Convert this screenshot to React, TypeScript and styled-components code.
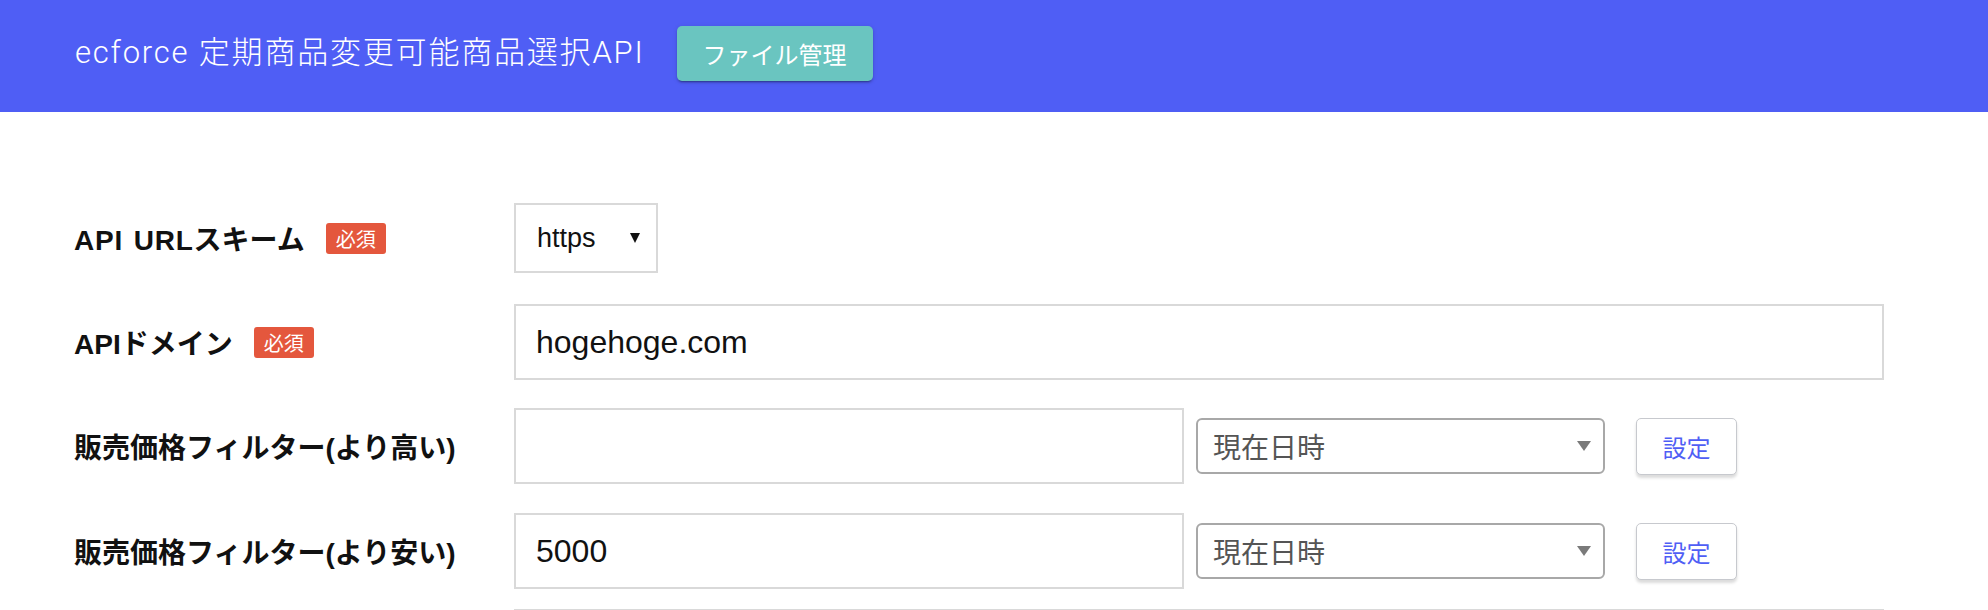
import styled, { createGlobalStyle } from "styled-components";

const GlobalStyle = createGlobalStyle`
  * {
    box-sizing: border-box;
  }
  body {
    margin: 0;
    background-color: #fff;
    color: #111;
    font-family: "Liberation Sans", "Noto Sans CJK JP", sans-serif;
  }
`;

const Header = styled.header`
  display: flex;
  align-items: center;
  gap: 32px;
  height: 112px;
  padding: 0 0 6px 75px;
  background-color: #4f5ef5;
`;

const Title = styled.h1`
  margin: 0 0 8px;
  color: #fff;
  font-family: "Roboto", "Noto Sans CJK JP", sans-serif;
  font-size: 31px;
  font-weight: 300;
  letter-spacing: 1.8px;
`;

const HeaderButton = styled.button`
  height: 55px;
  padding: 0 26px;
  border: none;
  border-radius: 5px;
  background-color: #6ac5c0;
  color: #fff;
  font-family: "Noto Sans CJK JP", sans-serif;
  font-size: 24px;
  box-shadow: 0 3px 1px -2px rgba(0, 0, 0, 0.2), 0 2px 2px 0 rgba(0, 0, 0, 0.14),
    0 1px 5px 0 rgba(0, 0, 0, 0.12);
  cursor: pointer;
`;

const Form = styled.main`
  padding: 91px 0 0 74px;
`;

const Row = styled.div<{ $gap: number }>`
  display: flex;
  align-items: center;
  margin-bottom: ${(p) => p.$gap}px;
`;

const Label = styled.label`
  display: flex;
  align-items: center;
  gap: 21px;
  flex-shrink: 0;
  width: 440px;
  font-size: 28px;
  font-weight: 700;
`;

const Latin = styled.span`
  letter-spacing: 0.8px;
  word-spacing: 2px;
`;

const Required = styled.span`
  display: inline-flex;
  align-items: center;
  height: 31px;
  padding: 0 10px;
  border-radius: 3px;
  background-color: #e4573d;
  color: #fff;
  font-size: 20px;
  font-weight: 400;
`;

const SchemeSelect = styled.div`
  display: flex;
  align-items: center;
  justify-content: space-between;
  width: 144px;
  height: 70px;
  padding: 0 16px 0 21px;
  border: 2px solid #d9d9d9;
  font-size: 27px;
  color: #111;
`;

const Caret = styled.span<{ $w: number; $h: number; $color: string }>`
  width: 0;
  height: 0;
  border-left: ${(p) => p.$w / 2}px solid transparent;
  border-right: ${(p) => p.$w / 2}px solid transparent;
  border-top: ${(p) => p.$h}px solid ${(p) => p.$color};
`;

const TextInput = styled.input<{ $width: number }>`
  width: ${(p) => p.$width}px;
  height: 76px;
  padding: 0 20px;
  border: 2px solid #d9d9d9;
  border-radius: 0;
  outline: none;
  font-family: "Liberation Sans", sans-serif;
  font-size: 32px;
  color: #111;
`;

const DateSelect = styled.div`
  display: flex;
  align-items: center;
  justify-content: space-between;
  width: 409px;
  height: 56px;
  margin-left: 12px;
  padding: 0 12px 0 15px;
  border: 2px solid #a8a8a8;
  border-radius: 6px;
  color: #555;
  font-family: "Noto Sans CJK JP", sans-serif;
  font-size: 28px;
`;

const SetButton = styled.button`
  width: 101px;
  height: 57px;
  margin-left: 31px;
  border: 1.5px solid #c7c9ce;
  border-radius: 5px;
  background-color: #fff;
  color: #4f5ef5;
  font-family: "Noto Sans CJK JP", sans-serif;
  font-size: 24px;
  box-shadow: 0 3px 3px rgba(0, 0, 0, 0.14);
  cursor: pointer;
`;

const priceFilters = [
  { label: "販売価格フィルター(より高い)", value: "", gap: 29 },
  { label: "販売価格フィルター(より安い)", value: "5000", gap: 20 },
];

export default function App() {
  return (
    <>
      <GlobalStyle />
      <Header>
        <Title>ecforce 定期商品変更可能商品選択API</Title>
        <HeaderButton>ファイル管理</HeaderButton>
      </Header>
      <Form>
        <Row $gap={31}>
          <Label>
            <span>
              <Latin>API URL</Latin>スキーム
            </span>
            <Required>必須</Required>
          </Label>
          <SchemeSelect>
            https
            <Caret $w={10} $h={10} $color="#111" />
          </SchemeSelect>
        </Row>
        <Row $gap={28}>
          <Label>
            APIドメイン<Required>必須</Required>
          </Label>
          <TextInput $width={1370} defaultValue="hogehoge.com" />
        </Row>
        {priceFilters.map((f) => (
          <Row $gap={f.gap} key={f.label}>
            <Label>{f.label}</Label>
            <TextInput $width={670} defaultValue={f.value} />
            <DateSelect>
              現在日時
              <Caret $w={14} $h={10} $color="#7a7a7a" />
            </DateSelect>
            <SetButton>設定</SetButton>
          </Row>
        ))}
        <Row $gap={0}>
          <Label />
          <TextInput $width={1370} />
        </Row>
      </Form>
    </>
  );
}
